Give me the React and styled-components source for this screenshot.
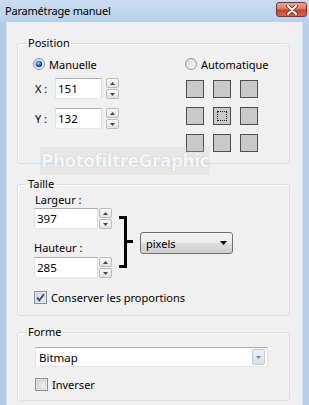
import React from 'react';
import styled, { createGlobalStyle } from 'styled-components';

const GlobalStyle = createGlobalStyle`
  html, body {
    margin: 0;
    padding: 0;
    background: #f0f0f0;
  }
  body {
    width: 309px;
    height: 405px;
    overflow: hidden;
    font-family: "Noto Sans", "Open Sans", sans-serif;
    font-size: 11px;
    color: #000;
  }
`

const Window = styled.div`
  position: relative;
  width: 309px;
  height: 405px;
  display: flex;
  flex-direction: column;
  background: linear-gradient(90deg, #b3cce6 0%, #c3d8ee 50%, #b7cfe8 100%);
  overflow: hidden;
`
const TitleBar = styled.div`
  height: 22px;
  flex: none;
  display: flex;
  align-items: center;
  justify-content: space-between;
  padding: 0 2px 0 5px;
  background: linear-gradient(#c9ddf2, #b8d0ea);
`
const Title = styled.span`
  font-size: 11px;
  letter-spacing: -0.2px;
  margin-top: -2px;
`
const CloseButton = styled.div`
  width: 31px;
  height: 15px;
  margin-top: -3px;
  box-sizing: border-box;
  border: 1px solid #7a3328;
  border-radius: 3px;
  background: linear-gradient(#e9a99c 0%, #d77865 45%, #c5422c 55%, #d4634c 100%);
  display: flex;
  align-items: center;
  justify-content: center;
`
const Body = styled.div`
  flex: 1;
  margin: 0 6px;
  padding: 13px 12px 0 10px;
  background: #f0f0f0;
  border-left: 1px solid #d6e2ee;
  border-right: 1px solid #d6e2ee;
`
const Group = styled.fieldset`
  margin: ${p => p.$top || 0}px 0 0 0;
  padding: 0 0 ${p => p.$bottom}px ${p => p.$left}px;
  min-width: 0;
  border: 1px solid #d5dfe5;
  border-radius: 3px;
  box-shadow: inset 1px 1px 0 #fff;
`
const Legend = styled.legend`
  margin-left: ${p => 8 - p.$indent}px;
  padding: 0 2px;
  line-height: 16px;
`
const Columns = styled.div`
  display: flex;
  align-items: flex-start;
  padding-top: 5px;
`
const Column = styled.div`
  display: flex;
  flex-direction: column;
  width: ${p => p.$w ? p.$w + 'px' : 'auto'};
`
const OptionRow = styled.label`
  display: flex;
  align-items: center;
  gap: 4px;
  height: 16px;
  margin-top: ${p => p.$top || 0}px;
`
const FieldRow = styled.div`
  display: flex;
  align-items: center;
  margin-top: ${p => p.$top || 0}px;
`
const AxisLabel = styled.span`
  width: 20px;
  margin-left: 2px;
`
const FieldLabel = styled.div`
  line-height: 16px;
  margin-top: ${p => p.$top || 0}px;
  margin-left: ${p => p.$left || 0}px;
`
const TextBox = styled.input`
  width: ${p => p.$w}px;
  height: 21px;
  box-sizing: border-box;
  margin: 0;
  padding: 0 0 0 2px;
  border: 1px solid;
  border-color: #abadb3 #dbdfe6 #e3e9ef #e2e3ea;
  background: #fff;
  font: inherit;
  font-size: 11.5px;
  color: #000;
  outline: none;
`
const Spin = styled.div`
  display: flex;
  flex-direction: column;
  gap: 1px;
  margin-left: ${p => p.$gap}px;
`
const SpinButton = styled.div`
  width: 13px;
  height: 10px;
  box-sizing: border-box;
  border: 1px solid #b8bcc1;
  border-radius: 2px;
  background: linear-gradient(#f8f8f8, #e3e3e3);
  display: flex;
  align-items: center;
  justify-content: center;
`
const PadGrid = styled.div`
  display: grid;
  grid-template-columns: repeat(3, 18px);
  grid-auto-rows: 18px;
  gap: 9px;
  margin: 8px 0 0 1px;
`
const PadCell = styled.div`
  box-sizing: border-box;
  border: 1px solid #4f4f4f;
  background: #c9c9c9;
  padding: 3px;
`
const FocusMark = styled.div`
  height: 100%;
  box-sizing: border-box;
  border: 1px dotted #222;
`
const SizeRow = styled.div`
  display: flex;
  align-items: flex-start;
`
const Bracket = styled.svg`
  flex: none;
  margin: 23px 0 0 6px;
`
const UnitSelect = styled.div`
  width: 93px;
  height: 22px;
  margin: 40px 0 0 6px;
  box-sizing: border-box;
  border: 1px solid #707070;
  border-radius: 3px;
  background: linear-gradient(#f3f3f3 0%, #ebebeb 48%, #dddddd 52%, #cfcfcf 100%);
  display: flex;
  align-items: center;
  justify-content: space-between;
  padding: 0 5px 0 5px;
`
const Combo = styled.div`
  width: 233px;
  height: 20px;
  margin-top: 7px;
  box-sizing: border-box;
  border: 1px solid;
  border-color: #abadb3 #dbdfe6 #e3e9ef #e2e3ea;
  background: #fff;
  display: flex;
  align-items: center;
  justify-content: space-between;
  padding: 0 2px 0 3px;
  font-size: 11.5px;
`
const ComboButton = styled.div`
  width: 13px;
  height: 16px;
  box-sizing: border-box;
  border: 1px solid #c3cad3;
  border-radius: 2px;
  background: linear-gradient(#eef1f5, #d6dde5);
  display: flex;
  align-items: center;
  justify-content: center;
`
const Watermark = styled.div`
  position: absolute;
  left: 40px;
  top: 147px;
  width: 170px;
  height: 28px;
  background: rgba(200, 200, 200, 0.22);
  display: flex;
  align-items: center;
  justify-content: center;
  font-family: "DejaVu Sans", sans-serif;
  font-weight: bold;
  font-size: 17px;
  letter-spacing: -0.5px;
  color: rgba(255, 255, 255, 0.85);
  text-shadow: 0 0 1px #c4c4c4, 0 0 1px #cccccc;
`

const Arrow = ({ up, color = '#444', w = 5, h = 3 }) => (
  <svg width={w} height={h} viewBox={`0 0 ${w} ${h}`}>
    <polygon points={up ? `0,${h} ${w},${h} ${w / 2},0` : `0,0 ${w},0 ${w / 2},${h}`} fill={color} />
  </svg>
)

const Spinner = ({ gap }) => (
  <Spin $gap={gap}>
    <SpinButton><Arrow up /></SpinButton>
    <SpinButton><Arrow /></SpinButton>
  </Spin>
)

const Radio = ({ checked }) => (
  <svg width="12" height="12" viewBox="0 0 12 12">
    <defs>
      <linearGradient id={checked ? 'rOn' : 'rOff'} x1="0" y1="0" x2="1" y2="1">
        <stop offset="0" stopColor="#d8d8d8" />
        <stop offset="1" stopColor="#fbfbfb" />
      </linearGradient>
      <radialGradient id="dot" cx="0.4" cy="0.35" r="0.7">
        <stop offset="0" stopColor="#8fd0ff" />
        <stop offset="0.5" stopColor="#2b6fbf" />
        <stop offset="1" stopColor="#0d3a78" />
      </radialGradient>
    </defs>
    <circle cx="6" cy="6" r="5.5" fill={`url(#${checked ? 'rOn' : 'rOff'})`} stroke="#8a939c" />
    {checked && <circle cx="6" cy="6" r="3.3" fill="url(#dot)" />}
  </svg>
)

const Check = ({ checked }) => (
  <svg width="13" height="13" viewBox="0 0 13 13">
    <defs>
      <linearGradient id={checked ? 'cOn' : 'cOff'} x1="0" y1="0" x2="1" y2="1">
        <stop offset="0" stopColor={checked ? '#c9d9ea' : '#d4d4d4'} />
        <stop offset="1" stopColor={checked ? '#f4f8fc' : '#f6f6f6'} />
      </linearGradient>
    </defs>
    <rect x="0.5" y="0.5" width="12" height="12" fill="#fff" stroke="#8e8f8f" />
    <rect x="2" y="2" width="9" height="9" fill={`url(#${checked ? 'cOn' : 'cOff'})`} stroke="#a8a8a8" strokeWidth="0.6" />
    {checked && <path d="M3.2 6.6 L5.4 9.3 L9.9 3.3" fill="none" stroke="#24497a" strokeWidth="1.8" />}
  </svg>
)

function App() {
  return (
    <Window>
      <GlobalStyle />
      <TitleBar>
        <Title>Paramétrage manuel</Title>
        <CloseButton>
          <svg width="12" height="10" viewBox="0 0 12 10">
            <path d="M2 1 L10 9 M10 1 L2 9" stroke="#6b2a20" strokeWidth="3.6" strokeLinecap="round" />
            <path d="M2 1 L10 9 M10 1 L2 9" stroke="#fff" strokeWidth="2" strokeLinecap="round" />
          </svg>
        </CloseButton>
      </TitleBar>
      <Body>
        <Group $left={15} $bottom={11}>
          <Legend $indent={15}>Position</Legend>
          <Columns>
            <Column $w={152}>
              <OptionRow><Radio checked />Manuelle</OptionRow>
              <FieldRow $top={6}>
                <AxisLabel>X :</AxisLabel>
                <TextBox $w={47} defaultValue="151" readOnly />
                <Spinner gap={4} />
              </FieldRow>
              <FieldRow $top={9}>
                <AxisLabel>Y :</AxisLabel>
                <TextBox $w={47} defaultValue="132" readOnly />
                <Spinner gap={4} />
              </FieldRow>
            </Column>
            <Column>
              <OptionRow><Radio />Automatique</OptionRow>
              <PadGrid>
                <PadCell /><PadCell /><PadCell />
                <PadCell /><PadCell><FocusMark /></PadCell><PadCell />
                <PadCell /><PadCell /><PadCell />
              </PadGrid>
            </Column>
          </Columns>
        </Group>

        <Group $top={12} $left={16} $bottom={10}>
          <Legend $indent={16}>Taille</Legend>
          <SizeRow>
            <Column $w={78}>
              <FieldLabel $left={1}>Largeur :</FieldLabel>
              <FieldRow>
                <TextBox $w={64} defaultValue="397" readOnly />
                <Spinner gap={1} />
              </FieldRow>
              <FieldLabel $top={11}>Hauteur :</FieldLabel>
              <FieldRow $top={1}>
                <TextBox $w={64} defaultValue="285" readOnly />
                <Spinner gap={1} />
              </FieldRow>
            </Column>
            <Bracket width="16" height="54" viewBox="0 0 16 54">
              <path d="M1 2.5 H7.5 M7.5 1 V53 M1 51.5 H7.5 M7.5 26.5 H15" stroke="#000" strokeWidth="3" fill="none" />
            </Bracket>
            <UnitSelect>
              <span>pixels</span>
              <Arrow color="#000" w={7} h={4} />
            </UnitSelect>
          </SizeRow>
          <OptionRow $top={11}><Check checked />Conserver les proportions</OptionRow>
        </Group>

        <Group $top={8} $left={17} $bottom={8}>
          <Legend $indent={17}>Forme</Legend>
          <Combo>
            <span>Bitmap</span>
            <ComboButton><Arrow color="#7b8794" w={5} h={3} /></ComboButton>
          </Combo>
          <OptionRow $top={9}><Check />Inverser</OptionRow>
        </Group>
      </Body>
      <Watermark>PhotofiltreGraphic</Watermark>
    </Window>
  )
}

export default App;
